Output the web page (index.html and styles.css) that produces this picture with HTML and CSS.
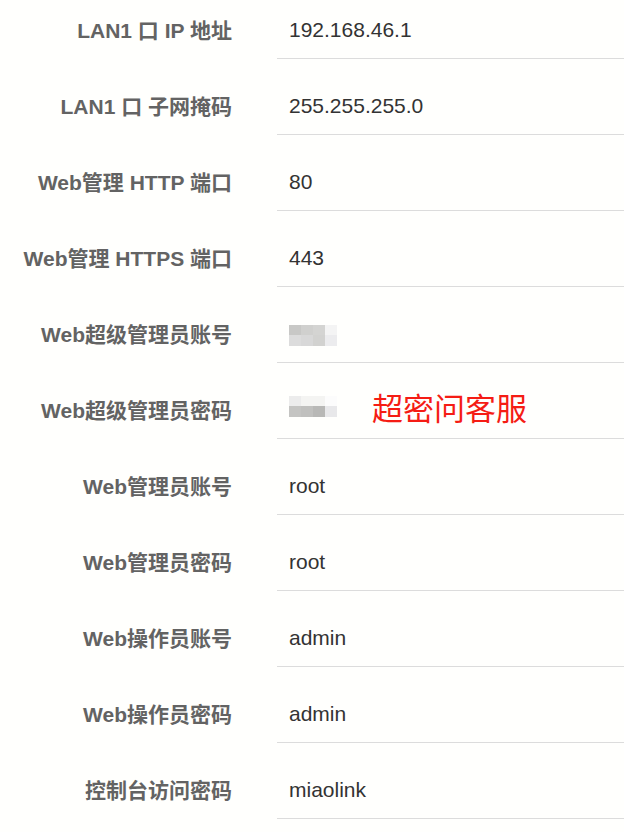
FILE: index.html
```html
<!DOCTYPE html>
<html lang="zh-CN">
<head>
<meta charset="utf-8">
<title>设置</title>
<link rel="stylesheet" href="styles.css">
</head>
<body>
<div class="table">
  <div class="row"><div class="label">LAN1 口 IP 地址</div><div class="value">192.168.46.1</div></div>
  <div class="row"><div class="label">LAN1 口 子网掩码</div><div class="value">255.255.255.0</div></div>
  <div class="row"><div class="label">Web管理 HTTP 端口</div><div class="value">80</div></div>
  <div class="row"><div class="label">Web管理 HTTPS 端口</div><div class="value">443</div></div>
  <div class="row"><div class="label">Web超级管理员账号</div><div class="value"><span class="mosaic mosaic-a"><i></i><i></i><i></i><i></i><i></i><i></i><i></i><i></i></span></div></div>
  <div class="row"><div class="label">Web超级管理员密码</div><div class="value"><span class="mosaic mosaic-b"><i></i><i></i><i></i><i></i><i></i><i></i><i></i><i></i></span><span class="note">超密问客服</span></div></div>
  <div class="row"><div class="label">Web管理员账号</div><div class="value">root</div></div>
  <div class="row"><div class="label">Web管理员密码</div><div class="value">root</div></div>
  <div class="row"><div class="label">Web操作员账号</div><div class="value">admin</div></div>
  <div class="row"><div class="label">Web操作员密码</div><div class="value">admin</div></div>
  <div class="row"><div class="label">控制台访问密码</div><div class="value">miaolink</div></div>
</div>
</body>
</html>
```
FILE: styles.css
```css
html, body {
  margin: 0;
  padding: 0;
  background: #fffffd;
}
body {
  font-family: "Liberation Sans", "Noto Sans CJK SC", sans-serif;
  font-size: 21px;
  overflow: hidden;
}
.table {
  margin-top: -17px;
}
.row {
  display: grid;
  grid-template-columns: 277px 1fr;
}
.label {
  text-align: right;
  padding: 37px 45px 0 0;
  line-height: 22px;
  font-weight: bold;
  color: #636363;
  white-space: nowrap;
}
.value {
  display: flex;
  align-items: center;
  height: 22px;
  padding: 36px 12px 17px;
  border-bottom: 1px solid #dcdcdc;
  color: #333;
  line-height: 22px;
}
.mosaic {
  display: grid;
  grid-template-columns: repeat(4, 12px);
  grid-template-rows: 10px 11px;
  align-self: flex-start;
}
.mosaic-a { margin-top: 2px; }
.mosaic-b { margin-top: -3px; }
.mosaic-a i:nth-child(1) { background: #c8c8c6; }
.mosaic-a i:nth-child(2) { background: #d0d0ce; }
.mosaic-a i:nth-child(3) { background: #d4d4d2; }
.mosaic-a i:nth-child(4) { background: #f4f4f4; }
.mosaic-a i:nth-child(5) { background: #dcdcdc; }
.mosaic-a i:nth-child(6) { background: #d8d8d8; }
.mosaic-a i:nth-child(7) { background: #d2d2d0; }
.mosaic-a i:nth-child(8) { background: #ececee; }
.mosaic-b i:nth-child(1) { background: #ececec; }
.mosaic-b i:nth-child(2) { background: #f4f4f2; }
.mosaic-b i:nth-child(3) { background: #f4f4f2; }
.mosaic-b i:nth-child(4) { background: #fcfcfc; }
.mosaic-b i:nth-child(5) { background: #c4c4c2; }
.mosaic-b i:nth-child(6) { background: #c0c0be; }
.mosaic-b i:nth-child(7) { background: #b8b8b6; }
.mosaic-b i:nth-child(8) { background: #e8e8ea; }
.note {
  margin-left: 35px;
  font-family: "Noto Sans CJK SC", sans-serif;
  font-size: 31px;
  line-height: 22px;
  color: #f51c14;
  position: relative;
  top: -3px;
}
```
